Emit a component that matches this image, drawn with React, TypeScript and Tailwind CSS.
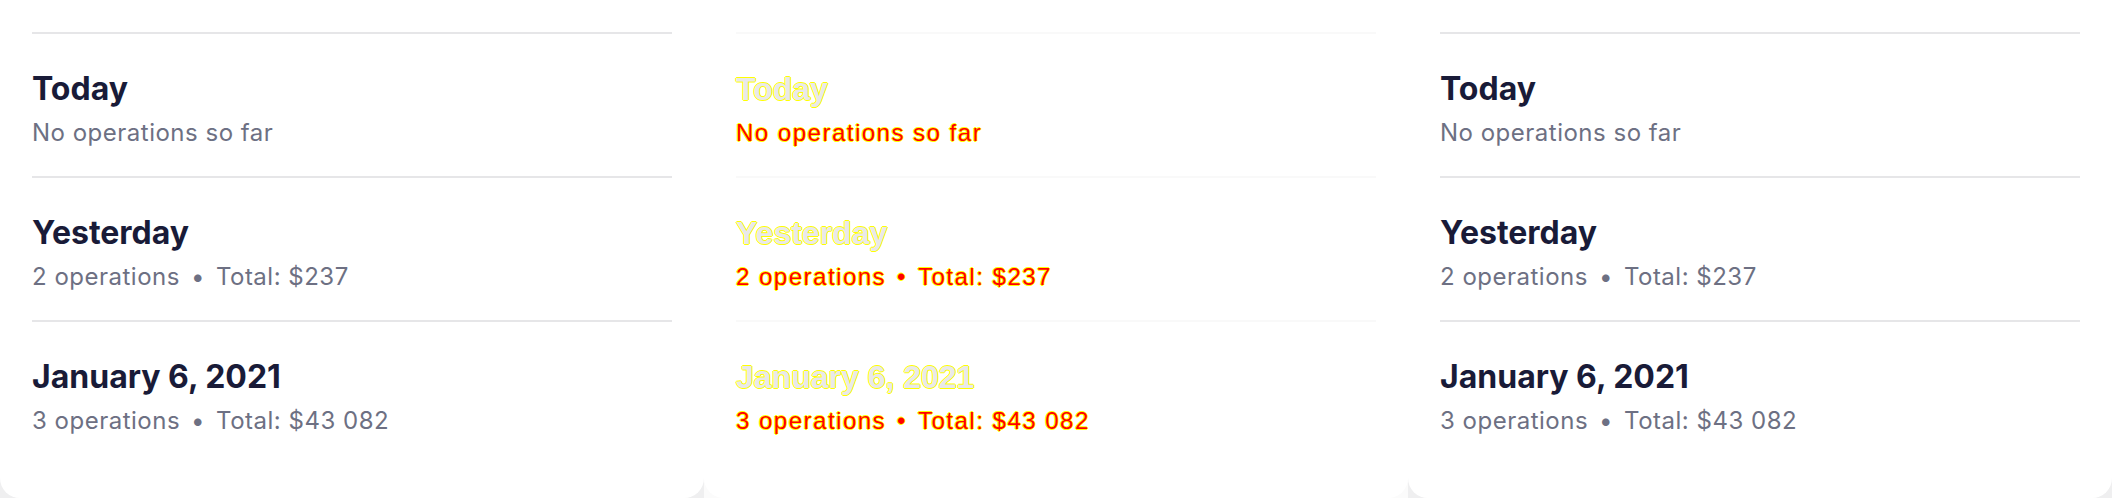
import React from "react";

type Day = { title: string; count?: string; total?: string };

const days: Day[] = [
  { title: "Today" },
  { title: "Yesterday", count: "2 operations", total: "Total: $237" },
  { title: "January 6, 2021", count: "3 operations", total: "Total: $43 082" },
];

function Summary({ day }: { day: Day }) {
  if (!day.count) return <>No operations so far</>;
  return (
    <>
      {day.count}
      <span className="mx-[11px]">•</span>
      {day.total}
    </>
  );
}

function HistoryCard() {
  return (
    <section className="h-[498px] w-[704px] shrink-0 rounded-b-[20px] bg-white px-8 pt-8 font-['Inter',sans-serif]">
      {days.map((day) => (
        <div key={day.title} className="border-t-2 border-[#e6e6e8] pt-[35px] pb-[27px]">
          <h3 className="text-[32px] leading-[40px] font-bold text-[#191b38]">{day.title}</h3>
          <p className="mt-2 text-[24px] leading-[32px] tracking-[0.5px] text-[#6d7083]">
            <Summary day={day} />
          </p>
        </div>
      ))}
    </section>
  );
}

// middle column: highlighted (diff) rendering of the same list
function DiffCard() {
  return (
    <div className="w-[704px] shrink-0 bg-[#fbfbfb]">
      <section className="h-[498px] rounded-b-[20px] bg-white px-8 pt-8 font-['Liberation_Sans',Arial,sans-serif]">
        {days.map((day) => (
          <div key={day.title} className="border-t-2 border-[#f9f9f9] pt-[35px] pb-[27px]">
            <h3 className="text-[32px] leading-[40px] font-bold text-[#e9e9e9] [text-shadow:1px_0_0_#ffff00,-1px_0_0_#ffff00,0_1px_0_#ffff00,0_-1px_0_#ffff00]">
              {day.title}
            </h3>
            <p className="mt-2 text-[24px] leading-[32px] tracking-[1.5px] text-[#ff0000] [text-shadow:1px_0_0_#ffff00,-1px_0_0_#ffff00,0_1px_0_#ffff00,0_-1px_0_#ffff00]">
              <Summary day={day} />
            </p>
          </div>
        ))}
      </section>
    </div>
  );
}

export default function App() {
  return (
    <main className="flex h-[498px] w-[2112px] overflow-hidden bg-[#efeff0]">
      <HistoryCard />
      <DiffCard />
      <HistoryCard />
    </main>
  );
}
